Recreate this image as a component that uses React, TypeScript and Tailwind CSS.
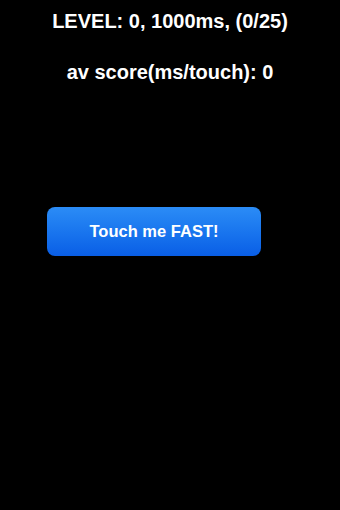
export default function App() {
  return (
    <div
      className="flex h-[510px] w-[340px] flex-col bg-black text-white"
      style={{ fontFamily: '"Liberation Sans", Arial, sans-serif' }}
    >
      <div className="pt-[9px] text-center text-[20px] font-bold leading-[24px]">
        LEVEL: 0, 1000ms, (0/25)
      </div>
      <div className="mt-[27px] text-center text-[20px] font-bold leading-[24px]">
        av score(ms/touch): 0
      </div>
      <div className="mt-[123px] pl-[47px]">
        <button className="flex h-[49px] w-[214px] items-center justify-center rounded-[8px] bg-gradient-to-b from-[#2b8cf6] to-[#0a5ee6] text-[16.5px] font-bold text-white">
          Touch me FAST!
        </button>
      </div>
    </div>
  );
}
